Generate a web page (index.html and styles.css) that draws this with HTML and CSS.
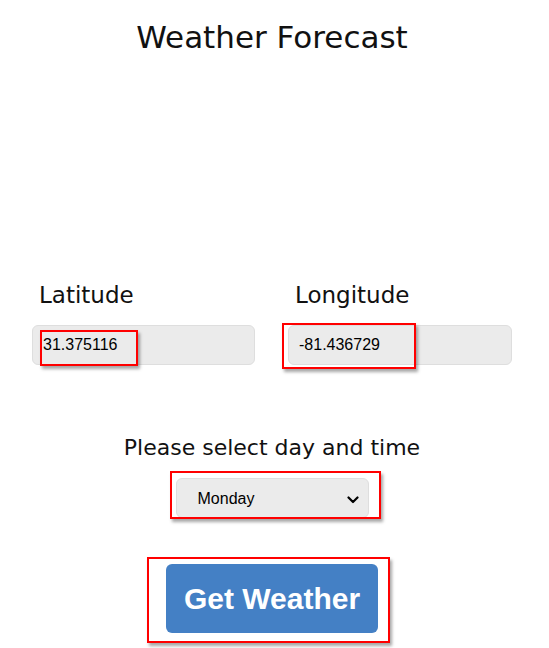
FILE: index.html
```html
<!DOCTYPE html>
<html lang="en">
<head>
<meta charset="utf-8">
<title>Weather Forecast</title>
<link rel="stylesheet" href="styles.css">
</head>
<body>
<main class="page">
  <h1 class="title">Weather Forecast</h1>
  <section class="coords">
    <div class="coord">
      <label class="label" for="lat">Latitude</label>
      <div class="field">
        <input id="lat" class="input" type="text" value="31.375116">
        <span class="hl hl-lat"></span>
      </div>
    </div>
    <div class="coord">
      <label class="label" for="lon">Longitude</label>
      <div class="field">
        <input id="lon" class="input" type="text" value="-81.436729">
        <span class="hl hl-lon"></span>
      </div>
    </div>
  </section>
  <section class="when">
    <label class="label label-center" for="day">Please select day and time</label>
    <div class="field field-select">
      <select id="day" class="select">
        <option>Monday</option>
        <option>Tuesday</option>
        <option>Wednesday</option>
      </select>
      <svg class="chev" width="12" height="8" viewBox="0 0 12 8" aria-hidden="true">
        <path d="M1.5 1.5 L6 6 L10.5 1.5" fill="none" stroke="#000" stroke-width="2.2" stroke-linecap="round" stroke-linejoin="round"/>
      </svg>
      <span class="hl hl-select"></span>
    </div>
    <div class="field field-btn">
      <button class="btn" type="button">Get Weather</button>
      <span class="hl hl-btn"></span>
    </div>
  </section>
</main>
</body>
</html>
```

FILE: styles.css
```css
* { box-sizing: border-box; }
html, body { margin: 0; padding: 0; background: #fff; }
body {
  font-family: "DejaVu Sans", "Open Sans", sans-serif;
  color: #111;
  width: 549px;
  min-height: 648px;
}
.page {
  display: flex;
  flex-direction: column;
  padding-right: 5px;
  padding-bottom: 20px;
}
.title {
  margin: 0;
  padding-top: 17px;
  font-size: 31px;
  line-height: 40px;
  font-weight: normal;
  text-align: center;
}
.coords {
  margin-top: 224px;
  padding-left: 32px;
  display: grid;
  grid-template-columns: 223px 224px;
  column-gap: 33px;
}
.coord { display: flex; flex-direction: column; }
.label {
  display: block;
  font-size: 23px;
  line-height: 28px;
  padding-left: 7px;
  color: #111;
}
.field { position: relative; }
.coord .field { margin-top: 16px; }
.input {
  display: block;
  width: 100%;
  height: 40px;
  background: #ebebeb;
  border: 1px solid #dedede;
  border-radius: 6px;
  padding: 0 10px;
  font-family: "Liberation Sans", Arial, sans-serif;
  font-size: 16px;
  color: #000;
  outline: none;
}
.hl {
  position: absolute;
  border: 2px solid #f00;
  box-shadow: 2px 3px 3px rgba(0, 0, 0, 0.35);
  pointer-events: none;
}
.hl-lat { left: 8px; top: 5px; width: 98px; height: 36px; }
.hl-lon { left: -6px; top: -2px; width: 134px; height: 46px; }

.when {
  margin-top: 70px;
  display: flex;
  flex-direction: column;
  align-items: center;
}
.label-center { padding-left: 0; font-size: 22px; line-height: 26px; }
.field-select { margin-top: 17px; }
.select {
  display: block;
  width: 193px;
  height: 40px;
  -webkit-appearance: none;
  appearance: none;
  background-color: #ebebeb;
  border: 1px solid #dedede;
  border-radius: 6px;
  padding: 0 30px 0 21px;
  font-family: "Liberation Sans", Arial, sans-serif;
  font-size: 16px;
  color: #000;
}
.chev {
  position: absolute;
  top: 18px;
  right: 10px;
  pointer-events: none;
}
.hl-select { left: -6px; top: -7px; width: 211px; height: 48px; }
.field-btn { margin-top: 46px; }
.btn {
  display: block;
  width: 212px;
  height: 69px;
  background: #4480c5;
  color: #fff;
  border: none;
  border-radius: 6px;
  font-family: "Liberation Sans", Arial, sans-serif;
  font-weight: bold;
  font-size: 30px;
  padding: 0;
}
.hl-btn { left: -19px; top: -7px; width: 243px; height: 86px; }
```
